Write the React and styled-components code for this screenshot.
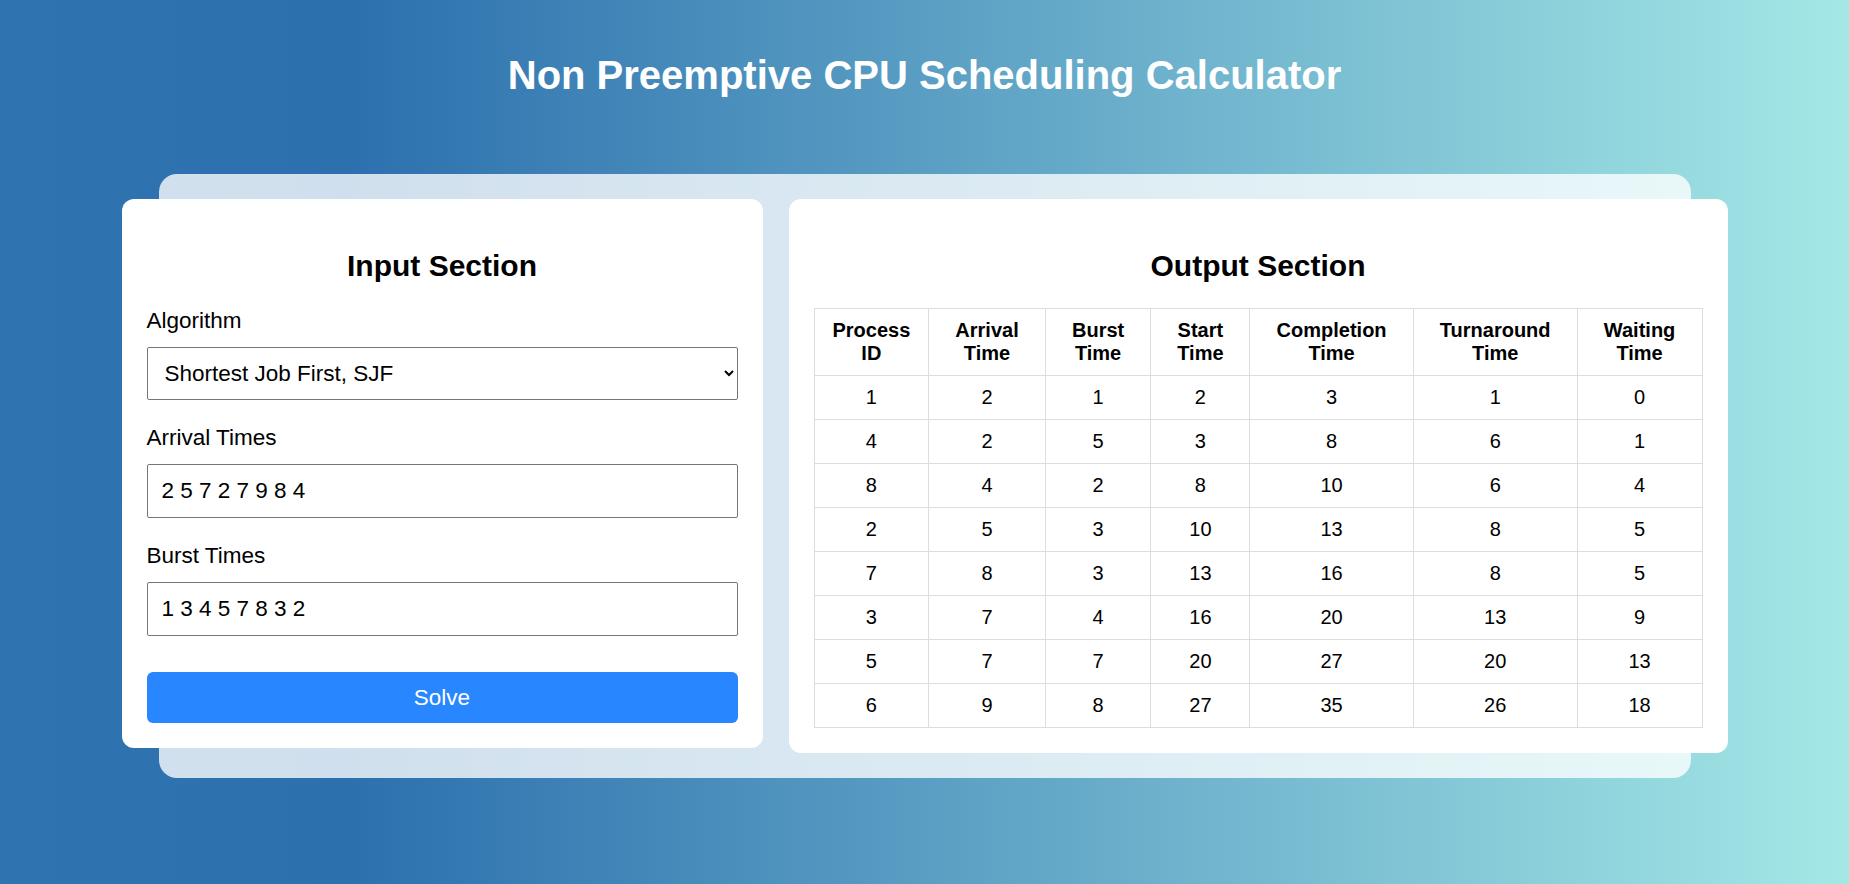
import React, { useState } from 'react';
import styled, { createGlobalStyle } from 'styled-components';

const GlobalStyle = createGlobalStyle`
  * {
    box-sizing: border-box;
  }
  html,
  body {
    margin: 0;
    padding: 0;
  }
  body {
    min-height: 100vh;
    font-family: 'Liberation Sans', Arial, sans-serif;
    color: #000;
    background: linear-gradient(
      90deg,
      #2f73b1 0%,
      #2c70ae 19%,
      #a4e8e6 100%
    );
    background-attachment: fixed;
  }
`;

const Page = styled.div`
  min-height: 100vh;
  padding: 25px;
`;

const Title = styled.h1`
  margin: 27px 0 0;
  font-size: 40px;
  line-height: 46px;
  font-weight: 700;
  color: #fff;
  text-align: center;
`;

const Backdrop = styled.div`
  width: 1532px;
  margin: 76px auto 0;
  padding: 25px 0;
  border-radius: 18px;
  background: rgba(255, 255, 255, 0.78);
`;

const Row = styled.div`
  display: flex;
  align-items: flex-start;
  gap: 26px;
  margin: 0 -37px;
`;

const Card = styled.section`
  flex: ${(p) => (p.$width ? `0 0 ${p.$width}px` : '1 1 0')};
  min-width: 0;
  padding: 25px;
  border-radius: 12px;
  background: #fff;
`;

const CardTitle = styled.h2`
  margin: 24.5px 0;
  font-size: 30px;
  line-height: 34.5px;
  font-weight: 700;
  text-align: center;
`;

const Label = styled.label`
  display: block;
  margin-bottom: 13.5px;
  font-size: 22.5px;
  line-height: 26px;
`;

const fieldStyles = `
  display: block;
  width: 100%;
  margin: 0 0 24.5px;
  border: 1px solid #767676;
  border-radius: 2px;
  background: #fff;
  color: #000;
  font-family: 'Liberation Sans', Arial, sans-serif;
  font-size: 22.5px;
  line-height: 26px;
  outline: none;
`;

const Select = styled.select`
  ${fieldStyles}
  height: 53px;
  padding: 0 8px 0 13px;
`;

const TextInput = styled.input`
  ${fieldStyles}
  height: 54px;
  padding: 13px 14px;
`;

const SolveButton = styled.button`
  display: block;
  width: 100%;
  height: 51px;
  margin-top: 36px;
  padding: 12.5px;
  border: none;
  border-radius: 6px;
  background: #2886fe;
  color: #fff;
  font-family: 'Liberation Sans', Arial, sans-serif;
  font-size: 22.5px;
  line-height: 26px;
  cursor: pointer;
`;

const Table = styled.table`
  width: 100%;
  border-collapse: collapse;
  font-size: 20px;
  line-height: 23px;
`;

const Th = styled.th`
  padding: 10px;
  border: 1px solid #ddd;
  font-weight: 700;
  text-align: center;
`;

const Td = styled.td`
  padding: 10px;
  border: 1px solid #ddd;
  text-align: center;
`;

const headers = [
  'Process ID',
  'Arrival Time',
  'Burst Time',
  'Start Time',
  'Completion Time',
  'Turnaround Time',
  'Waiting Time',
];

const rows = [
  [1, 2, 1, 2, 3, 1, 0],
  [4, 2, 5, 3, 8, 6, 1],
  [8, 4, 2, 8, 10, 6, 4],
  [2, 5, 3, 10, 13, 8, 5],
  [7, 8, 3, 13, 16, 8, 5],
  [3, 7, 4, 16, 20, 13, 9],
  [5, 7, 7, 20, 27, 20, 13],
  [6, 9, 8, 27, 35, 26, 18],
];

export default function App() {
  const [algorithm, setAlgorithm] = useState('sjf');
  const [arrival, setArrival] = useState('2 5 7 2 7 9 8 4');
  const [burst, setBurst] = useState('1 3 4 5 7 8 3 2');

  return (
    <>
      <GlobalStyle />
      <Page>
        <Title>Non Preemptive CPU Scheduling Calculator</Title>
        <Backdrop>
          <Row>
            <Card $width={641}>
              <CardTitle>Input Section</CardTitle>
              <Label htmlFor="algorithm">Algorithm</Label>
              <Select id="algorithm" value={algorithm} onChange={(e) => setAlgorithm(e.target.value)}>
                <option value="fcfs">First Come First Serve, FCFS</option>
                <option value="sjf">Shortest Job First, SJF</option>
                <option value="priority">Priority</option>
              </Select>
              <Label htmlFor="arrival">Arrival Times</Label>
              <TextInput id="arrival" value={arrival} onChange={(e) => setArrival(e.target.value)} />
              <Label htmlFor="burst">Burst Times</Label>
              <TextInput id="burst" value={burst} onChange={(e) => setBurst(e.target.value)} />
              <SolveButton type="button">Solve</SolveButton>
            </Card>
            <Card>
              <CardTitle>Output Section</CardTitle>
              <Table>
                <thead>
                  <tr>
                    {headers.map((h) => (
                      <Th key={h}>{h}</Th>
                    ))}
                  </tr>
                </thead>
                <tbody>
                  {rows.map((r, i) => (
                    <tr key={i}>
                      {r.map((v, j) => (
                        <Td key={j}>{v}</Td>
                      ))}
                    </tr>
                  ))}
                </tbody>
              </Table>
            </Card>
          </Row>
        </Backdrop>
      </Page>
    </>
  );
}
